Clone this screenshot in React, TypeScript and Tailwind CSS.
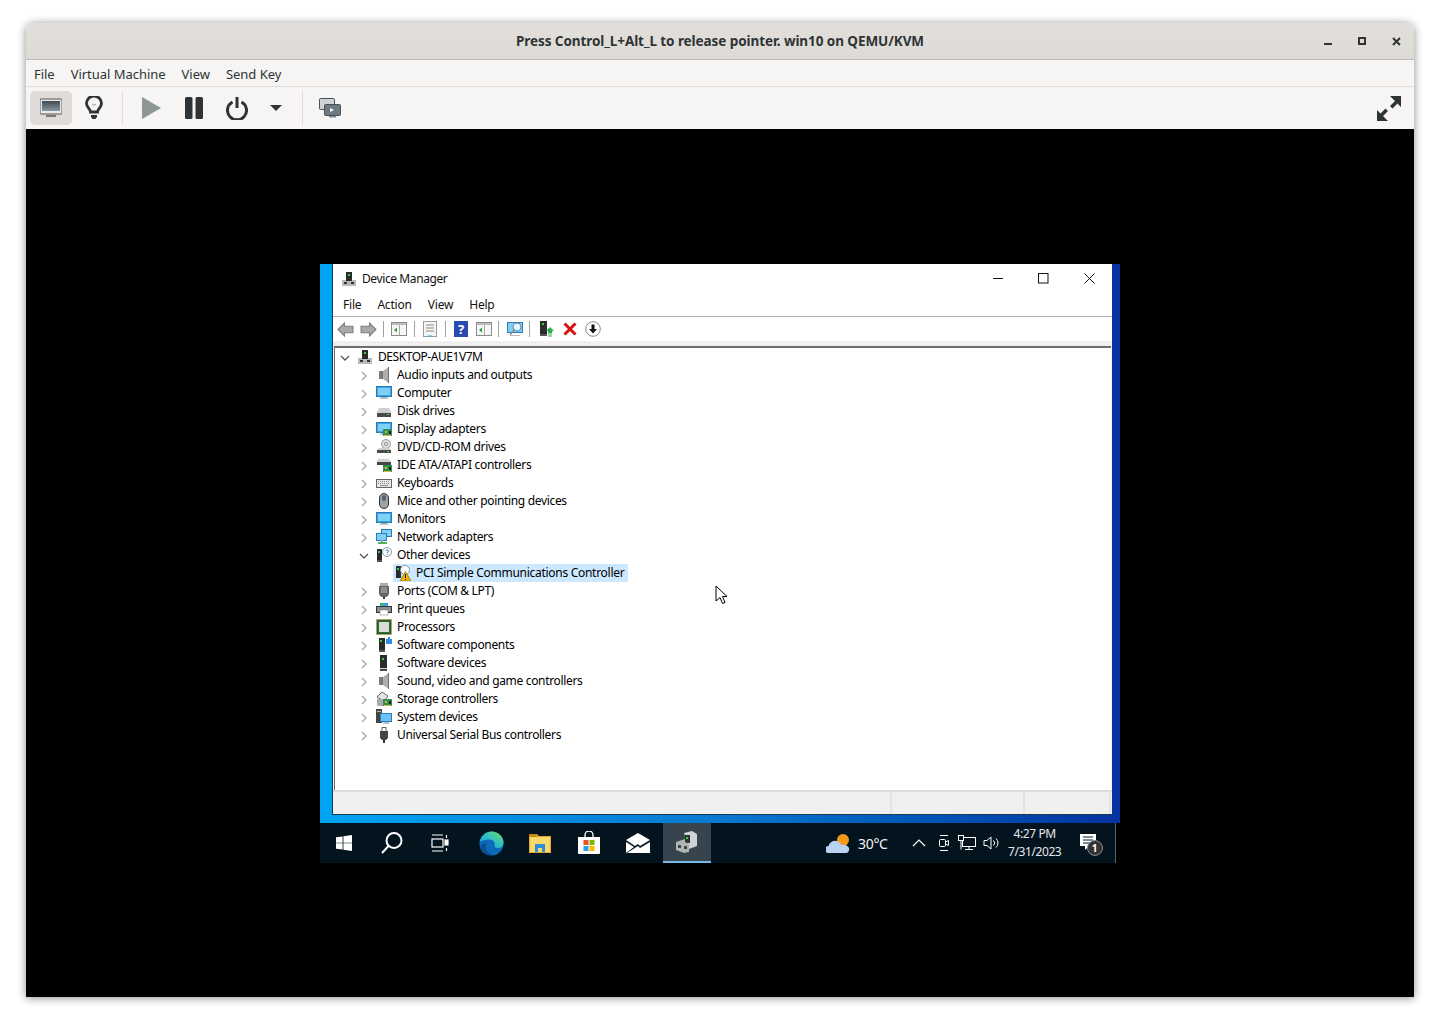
import type { ReactNode } from 'react'

const winFont = 'font-["Noto_Sans",sans-serif]'

type IconName =
  | 'root' | 'audio' | 'computer' | 'disk' | 'display' | 'dvd' | 'ide' | 'keyboard' | 'mouse' | 'monitor'
  | 'network' | 'other' | 'warn' | 'ports' | 'print' | 'cpu' | 'swcomp' | 'swdev' | 'storage' | 'system' | 'usb'

const TREE: { label: string; icon: IconName; open?: boolean }[] = [
  { label: 'Audio inputs and outputs', icon: 'audio' },
  { label: 'Computer', icon: 'computer' },
  { label: 'Disk drives', icon: 'disk' },
  { label: 'Display adapters', icon: 'display' },
  { label: 'DVD/CD-ROM drives', icon: 'dvd' },
  { label: 'IDE ATA/ATAPI controllers', icon: 'ide' },
  { label: 'Keyboards', icon: 'keyboard' },
  { label: 'Mice and other pointing devices', icon: 'mouse' },
  { label: 'Monitors', icon: 'monitor' },
  { label: 'Network adapters', icon: 'network' },
  { label: 'Other devices', icon: 'other', open: true },
]

const TREE_AFTER: { label: string; icon: IconName }[] = [
  { label: 'Ports (COM & LPT)', icon: 'ports' },
  { label: 'Print queues', icon: 'print' },
  { label: 'Processors', icon: 'cpu' },
  { label: 'Software components', icon: 'swcomp' },
  { label: 'Software devices', icon: 'swdev' },
  { label: 'Sound, video and game controllers', icon: 'audio' },
  { label: 'Storage controllers', icon: 'storage' },
  { label: 'System devices', icon: 'system' },
  { label: 'Universal Serial Bus controllers', icon: 'usb' },
]

function Svg({ size = 16, vb = 16, className, children }: { size?: number; vb?: number; className?: string; children: ReactNode }) {
  return (
    <svg width={size} height={size} viewBox={`0 0 ${vb} ${vb}`} className={className} fill="none">
      {children}
    </svg>
  )
}

function Tower() {
  return (
    <>
      <rect x="5" y="1" width="6" height="9" fill="#2b2b2b" />
      <rect x="7" y="3" width="2" height="2" fill="#35d04a" />
      <path d="M1 9h4v1h6V9h4v6H1z" fill="#b9b9b9" />
      <rect x="3" y="11" width="3" height="2" fill="#333" />
      <rect x="10" y="11" width="3" height="2" fill="#333" />
    </>
  )
}

function Screen() {
  return (
    <>
      <rect x="0.5" y="1.5" width="15" height="10" fill="#39a6e8" stroke="#2a7cb8" />
      <rect x="2" y="3" width="12" height="7" fill="#7fd0f7" />
      <rect x="5" y="12" width="6" height="1" fill="#9aa5ad" />
      <rect x="3" y="13" width="10" height="1" fill="#c5ccd2" />
    </>
  )
}

function Chip() {
  return (
    <>
      <rect x="7" y="8" width="9" height="7" fill="#2f8f4f" />
      <rect x="9" y="10" width="2" height="2" fill="#d9b13b" />
      <rect x="13" y="10" width="2" height="3" fill="#123" />
      <rect x="8" y="14" width="7" height="1" fill="#e0b93d" />
    </>
  )
}

function DeviceIcon({ name }: { name: IconName }) {
  switch (name) {
    case 'root':
      return <Svg><Tower /></Svg>
    case 'audio':
      return (
        <Svg>
          <rect x="3" y="4" width="4" height="8" fill="#7b7b7b" />
          <path d="M7 4l6-4v16l-6-4z" fill="#adadad" />
          <path d="M12.500 0v16" stroke="#6f6f6f" />
        </Svg>
      )
    case 'computer':
    case 'monitor':
      return <Svg><Screen /></Svg>
    case 'disk':
      return (
        <Svg>
          <path d="M3 5h10l2 4v5H1V9z" fill="#cfcfcf" />
          <rect x="1" y="10" width="14" height="4" fill="#4a4a4a" />
          <rect x="11" y="11" width="2" height="1" fill="#37d24c" />
        </Svg>
      )
    case 'display':
      return <Svg><Screen /><Chip /></Svg>
    case 'dvd':
      return (
        <Svg>
          <circle cx="10" cy="5" r="4.5" fill="#ddd" stroke="#9a9a9a" />
          <circle cx="10" cy="5" r="1.5" fill="#fff" stroke="#888" />
          <path d="M3 9h10l2 2v3H1v-3z" fill="#cfcfcf" />
          <rect x="1" y="11" width="14" height="3" fill="#4a4a4a" />
          <rect x="11" y="12" width="2" height="1" fill="#37d24c" />
        </Svg>
      )
    case 'ide':
      return (
        <Svg>
          <path d="M2 2h11l2 3v3H1V5z" fill="#d2d2d2" />
          <rect x="1" y="5" width="14" height="3" fill="#444" />
          <Chip />
        </Svg>
      )
    case 'keyboard':
      return (
        <Svg>
          <rect x="0.5" y="4.5" width="15" height="8" fill="#e6e6e6" stroke="#666" />
          <path d="M2 6.500h12M2 8.500h12" stroke="#8e8e8e" strokeDasharray="1 1" />
          <path d="M4 10.500h8" stroke="#8e8e8e" />
        </Svg>
      )
    case 'mouse':
      return (
        <Svg>
          <rect x="3.500" y="0.500" width="9" height="15" rx="4.500" fill="#9aa2aa" stroke="#333" />
          <rect x="6" y="2" width="4" height="6" rx="2" fill="#59626b" />
        </Svg>
      )
    case 'network':
      return (
        <Svg>
          <rect x="5.500" y="0.500" width="10" height="7" fill="#7fd0f7" stroke="#2a7cb8" />
          <rect x="0.500" y="4.500" width="10" height="7" fill="#7fd0f7" stroke="#2a7cb8" />
          <rect x="2" y="13" width="9" height="2" fill="#4cb35f" />
          <rect x="5" y="11" width="2" height="2" fill="#9aa5ad" />
        </Svg>
      )
    case 'other':
      return (
        <Svg>
          <rect x="1" y="2" width="5" height="11" fill="#2b2b2b" />
          <rect x="2" y="4" width="2" height="2" fill="#35d04a" />
          <rect x="1" y="13" width="5" height="2" fill="#555" />
          <circle cx="11" cy="5" r="4.500" fill="#fff" stroke="#8a9aa8" />
          <path d="M9.700 3.800c.3-1.200 2.800-1.200 2.800.3 0 1-1.300 1-1.300 2M11.200 7v.8" stroke="#2b6fb5" />
        </Svg>
      )
    case 'warn':
      return (
        <Svg>
          <rect x="1" y="1" width="5" height="12" fill="#2b2b2b" />
          <rect x="2" y="3" width="2" height="2" fill="#35d04a" />
          <circle cx="10" cy="5" r="4.500" fill="#fff" stroke="#8a9aa8" />
          <path d="M10.500 6.500L16 16H5z" fill="#f2b600" stroke="#7d5b00" strokeWidth="0.6" />
          <path d="M10.500 9v4M10.500 14v1" stroke="#222" />
        </Svg>
      )
    case 'ports':
      return (
        <Svg>
          <path d="M3 3h10v8l-2 3H5l-2-3z" fill="#666" />
          <rect x="4" y="0" width="8" height="3" fill="#aaa" />
          <path d="M5 5h6M5 7h6M5 9h6" stroke="#bbb" />
          <rect x="7" y="14" width="2" height="2" fill="#333" />
        </Svg>
      )
    case 'print':
      return (
        <Svg>
          <rect x="4" y="2" width="8" height="4" fill="#3aa0e0" />
          <rect x="4" y="2" width="3" height="2" fill="#35c24c" />
          <rect x="0.500" y="5.500" width="15" height="6" fill="#8c8c8c" stroke="#333" />
          <rect x="4" y="9" width="8" height="5" fill="#fff" stroke="#777" strokeWidth="0.5" />
        </Svg>
      )
    case 'cpu':
      return (
        <Svg>
          <rect x="0.500" y="0.500" width="15" height="15" fill="#245c2f" stroke="#c4a53a" strokeDasharray="1 1" />
          <rect x="2" y="2" width="12" height="12" fill="#2e6b39" />
          <rect x="3" y="3" width="10" height="10" fill="#d8dcd8" />
        </Svg>
      )
    case 'swcomp':
      return (
        <Svg>
          <rect x="3" y="1" width="6" height="12" fill="#2b2b2b" />
          <rect x="4" y="3" width="2" height="2" fill="#35d04a" />
          <rect x="3" y="13" width="6" height="2" fill="#555" />
          <path d="M10 2h2V0h2v2h2v5h-6z" fill="#2f8fe0" />
        </Svg>
      )
    case 'swdev':
      return (
        <Svg>
          <rect x="4" y="0" width="7" height="13" fill="#2b2b2b" />
          <rect x="6" y="3" width="2" height="2" fill="#35d04a" />
          <rect x="4" y="13" width="7" height="1" fill="#ccc" />
          <rect x="4" y="14" width="7" height="2" fill="#444" />
        </Svg>
      )
    case 'storage':
      return (
        <Svg>
          <path d="M1 6l5-5 6 4-4 5z" fill="#e4e4e4" stroke="#666" />
          <path d="M1 8h7v7H1z" fill="#aaa" />
          <Chip />
        </Svg>
      )
    case 'system':
      return (
        <Svg>
          <rect x="0" y="0" width="6" height="14" fill="#444" />
          <rect x="1" y="2" width="4" height="1" fill="#bbb" />
          <rect x="4.500" y="4.500" width="11" height="8" fill="#6cc3f3" stroke="#2a7cb8" />
          <rect x="7" y="13" width="6" height="2" fill="#b8c2ca" />
        </Svg>
      )
    case 'usb':
      return (
        <Svg>
          <rect x="6" y="0.500" width="4" height="4" fill="#fff" stroke="#666" />
          <path d="M4 4h8v7l-2 2H6l-2-2z" fill="#444" />
          <rect x="7" y="13" width="2" height="3" fill="#333" />
        </Svg>
      )
  }
}

function Chevron({ open }: { open?: boolean }) {
  return (
    <svg width="16" height="16" viewBox="0 0 16 16" fill="none">
      {open ? (
        <path d="M4 6l4 4 4-4" stroke="#555" strokeWidth="1.300" />
      ) : (
        <path d="M6 4l4 4-4 4" stroke="#a6a6a6" strokeWidth="1.300" />
      )}
    </svg>
  )
}

function TreeRow({ label, icon, open }: { label: string; icon: IconName; open?: boolean }) {
  return (
    <div className="flex h-[18px] items-center pl-[21px]">
      <span className="mt-[2px] flex w-[20px]"><Chevron open={open} /></span>
      <DeviceIcon name={icon} />
      <span className="ml-[5px] text-[12px] tracking-[-0.33px] text-black">{label}</span>
    </div>
  )
}

function ArrowBtn({ flip }: { flip?: boolean }) {
  return (
    <Svg size={17} className={flip ? '-scale-x-100' : ''}>
      <path d="M1 8l6-6v3h8v6H7v3z" fill="#a9a9a9" stroke="#7d7d7d" />
    </Svg>
  )
}

function Sheet({ arrow }: { arrow?: string }) {
  return (
    <Svg>
      <rect x="0.500" y="1.500" width="15" height="13" fill="#f7f7f7" stroke="#8a8a8a" />
      <rect x="1" y="2" width="14" height="2" fill="#bcbcbc" />
      <path d="M8.500 4v10" stroke="#aaa" />
      {arrow ? <path d="M3 9l3-2.500v5z" fill={arrow} /> : <path d="M2 7h5M2 9h5M2 11h5" stroke="#999" />}
    </Svg>
  )
}

function Sep() {
  return <span className="mx-[6px] h-[16px] w-px bg-[#a0a0a0]" />
}

function DmToolbar() {
  return (
    <div className="flex h-[24px] items-center pl-[4px]">
      <ArrowBtn />
      <span className="w-[6px]" />
      <ArrowBtn flip />
      <Sep />
      <span className="ml-[1px] mr-[1px]"><Sheet arrow="#2e9e4b" /></span>
      <Sep />
      <span className="ml-[1px] mr-[1px]">
        <Svg>
          <rect x="1.500" y="0.500" width="13" height="15" fill="#f4f4f4" stroke="#9a9a9a" />
          <path d="M4 4h8M4 7h8M4 10h8" stroke="#8a8a8a" />
          <path d="M6 15h4" stroke="#39a6e8" />
        </Svg>
      </span>
      <Sep />
      <span className="ml-[2px] mr-[8px] flex h-[16px] w-[14px] items-center justify-center bg-[#2a4bb0] text-[13px] font-bold leading-none text-white">?</span>
      <Sheet arrow="#2e9e4b" />
      <Sep />
      <span className="ml-[2px]">
        <Svg>
          <rect x="0.500" y="1.500" width="15" height="10" fill="#7fd0f7" stroke="#2a7cb8" />
          <circle cx="10" cy="6" r="4" fill="#e8f6fd" stroke="#6a8aa0" />
          <path d="M7 9l-4 5" stroke="#8a8a8a" strokeWidth="1.500" />
          <path d="M3 14.500h10" stroke="#bbb" />
        </Svg>
      </span>
      <Sep />
      <span className="ml-[3px]">
        <Svg>
          <rect x="1" y="0" width="7" height="13" fill="#2b2b2b" />
          <rect x="3" y="2" width="2" height="2" fill="#35d04a" />
          <rect x="1" y="13" width="7" height="2" fill="#555" />
          <path d="M11 6l4 4h-2v2H9v-2H7z" fill="#2fae4a" />
          <path d="M9 13h4M9 15h4" stroke="#2fae4a" />
        </Svg>
      </span>
      <span className="ml-[7px]">
        <Svg>
          <path d="M2.500 2.500l11 11M13.500 2.500l-11 11" stroke="#d90f0f" strokeWidth="3" />
        </Svg>
      </span>
      <span className="ml-[7px]">
        <Svg>
          <circle cx="8" cy="8" r="7.300" fill="#fff" stroke="#8a8a8a" />
          <path d="M6.500 3.500h3V8H12l-4 4.500L4 8h2.500z" fill="#111" />
        </Svg>
      </span>
    </div>
  )
}

function DeviceManager() {
  return (
    <div className={`flex h-[550px] flex-col bg-white ${winFont}`}>
      <div className="flex h-[29px] shrink-0 items-center pl-[8px]">
        <Svg><Tower /></Svg>
        <span className="ml-[5px] text-[12px] tracking-[-0.4px] text-[#111]">Device Manager</span>
        <div className="ml-auto flex items-center pr-[17px]">
          <Svg size={11} vb={11}><path d="M0 5.500h10" stroke="#111" /></Svg>
          <span className="w-[34px]" />
          <Svg size={11} vb={11}><rect x="0.500" y="0.500" width="9.500" height="9.500" stroke="#111" /></Svg>
          <span className="w-[35px]" />
          <Svg size={11} vb={11}><path d="M0.500 0.500l10 10M10.500 0.500l-10 10" stroke="#111" /></Svg>
        </div>
      </div>
      <div className="flex h-[24px] shrink-0 items-center gap-[16px] border-b border-[#b0b0b8] pl-[10px] text-[12px] tracking-[-0.2px] text-[#111]">
        <span>File</span>
        <span>Action</span>
        <span>View</span>
        <span>Help</span>
      </div>
      <DmToolbar />
      <div className="flex min-h-0 flex-1 flex-col bg-[#f0f0f0] pt-[5px]">
        <div className="ml-px mr-px flex-1 border-t-2 border-l border-[#6d6d6d] bg-white">
          <div className="flex h-[18px] items-center pl-[2px]">
            <span className="mt-[1px] flex w-[20px]"><Chevron open /></span>
            <DeviceIcon name="root" />
            <span className="ml-[5px] text-[12px] tracking-[-0.45px] text-black">DESKTOP-AUE1V7M</span>
          </div>
          {TREE.map((row) => <TreeRow key={row.label} {...row} />)}
          <div className="flex h-[18px] items-center pl-[58px]">
            <span className="flex h-[18px] items-center bg-[#cce8ff] pl-[2px] pr-[4px] text-[12px] tracking-[-0.28px] text-black">
              <DeviceIcon name="warn" />
              <span className="ml-[5px]">PCI Simple Communications Controller</span>
            </span>
          </div>
          {TREE_AFTER.map((row) => <TreeRow key={row.label} {...row} />)}
        </div>
        <div className="flex h-[24px] shrink-0 border-t-2 border-[#dcdcdc]">
          <span className="w-[559px] border-r-2 border-[#e3e3e3]" />
          <span className="w-[133px] border-r-2 border-[#e3e3e3]" />
          <span className="w-[86px] border-r-2 border-[#e3e3e3]" />
        </div>
      </div>
    </div>
  )
}

function TaskSlot({ width = 'w-[48px]', active, children }: { width?: string; active?: boolean; children: ReactNode }) {
  return (
    <div className={`flex h-full ${width} items-center justify-center ${active ? 'border-b-2 border-[#76b9ed] bg-[#37444d]' : ''}`}>
      {children}
    </div>
  )
}

function Taskbar() {
  return (
    <div className="flex h-[40px] w-[796px] items-center border-r border-[#5a646b] bg-[#03141f] font-['Noto_Sans',sans-serif] text-white">
      <TaskSlot>
        <svg width="16" height="16" viewBox="0 0 16 16"><path d="M0 2.300l6.600-.9v6.300H0zM7.400 1.300L16 0v7.700H7.400zM0 8.300h6.600v6.300L0 13.700zM7.400 8.300H16V16l-8.600-1.300z" fill="#fff" /></svg>
      </TaskSlot>
      <TaskSlot>
        <svg width="24" height="24" viewBox="0 0 24 24" fill="none"><circle cx="14" cy="9.500" r="7.500" stroke="#fff" strokeWidth="2" /><path d="M8.500 15L2 22" stroke="#fff" strokeWidth="2" /></svg>
      </TaskSlot>
      <TaskSlot>
        <svg width="18" height="18" viewBox="0 0 18 18" fill="none" stroke="#fff" strokeWidth="1.200"><path d="M1 1h11M1 17h11" /><rect x="1" y="5" width="11" height="8" /><path d="M15.500 1v3M15.500 14v3" /><rect x="14" y="6" width="3" height="5" fill="#fff" /></svg>
      </TaskSlot>
      <span className="w-[3px]" />
      <TaskSlot width="w-[49px]">
        <svg width="25" height="25" viewBox="0 0 25 25">
          <defs>
            <linearGradient id="edgeTop" x1="0" y1="1" x2="1" y2="0">
              <stop offset="0" stopColor="#1b9de2" />
              <stop offset="0.55" stopColor="#35c1c0" />
              <stop offset="1" stopColor="#72e05a" />
            </linearGradient>
          </defs>
          <circle cx="12.500" cy="12.500" r="12" fill="#0d6ab8" />
          <path d="M.7 11C2 4.500 7.500.5 12.500.5c7 0 12 5.500 12 11 0 3.500-2.500 5.500-5.500 5.500-2.500 0-4-1-3.500-2.500 1-3-1.500-6-5-6-4 0-8 1-10.300 2.500z" fill="url(#edgeTop)" />
          <path d="M7.500 12c-2.500 4 0 10 6 11.500-5.500 1.500-11-1.500-12.500-7C3 13 5.500 12 7.500 12z" fill="#0a4f94" />
        </svg>
      </TaskSlot>
      <TaskSlot width="w-[48px]">
        <svg width="22" height="20" viewBox="0 0 22 20">
          <path d="M0 1h8l2 2h12v17H0z" fill="#e0a92e" />
          <rect x="0" y="1" width="8" height="3" fill="#c98a12" />
          <rect x="1" y="4" width="20" height="15" fill="#fbd96b" />
          <path d="M6 19v-8h10v8h-3v-4H9v4z" fill="#2d8fdc" />
        </svg>
      </TaskSlot>
      <TaskSlot width="w-[49px]">
        <svg width="24" height="24" viewBox="0 0 24 24" fill="none">
          <path d="M8 7V4a4 4 0 0 1 8 0v3" stroke="#fff" strokeWidth="1.300" />
          <path d="M1 6h22v16a1 1 0 0 1-1 1H2a1 1 0 0 1-1-1z" fill="#fff" />
          <rect x="6.500" y="9" width="5" height="5" fill="#e8532b" />
          <rect x="12.500" y="9" width="5" height="5" fill="#7fba00" />
          <rect x="6.500" y="15" width="5" height="5" fill="#2b9fe8" />
          <rect x="12.500" y="15" width="5" height="5" fill="#fdb900" />
        </svg>
      </TaskSlot>
      <TaskSlot width="w-[49px]">
        <svg width="24" height="20" viewBox="0 0 24 20">
          <path d="M0 7L12 0l12 7-10 6-2-2-3 2z" fill="#fff" />
          <path d="M0 9l8 5-8 6zM24 9v11H1l11-7 2 2z" fill="#fff" />
        </svg>
      </TaskSlot>
      <span className="w-px" />
      <TaskSlot active>
        <svg width="24" height="22" viewBox="0 0 24 22">
          <path d="M9 2l8-2 5 3v12l-8 3z" fill="#cfd3d6" />
          <rect x="10" y="4" width="5" height="8" fill="#333" />
          <rect x="11" y="6" width="2" height="2" fill="#35d04a" />
          <path d="M1 11l9-3v3l4 2v8l-5 1-8-3z" fill="#aeb3b6" />
          <rect x="3" y="14" width="3" height="3" fill="#444" />
          <rect x="9" y="15" width="3" height="3" fill="#444" />
        </svg>
      </TaskSlot>
      <span className="w-[115px]" />
      <svg width="24" height="20" viewBox="0 0 24 20">
        <circle cx="17" cy="7" r="6" fill="#f39a1e" />
        <path d="M3 20a3.500 3.500 0 0 1-.5-7C4 8 10 6 14 10c1 1 1 2 1 2 4-1 7 .5 8 3 .7 3-1 5-3 5z" fill="#b9d3f2" />
      </svg>
      <span className="ml-[8px] text-[14px] tracking-[-0.3px] text-[#f2f2f2]">30°C</span>
      <span className="ml-[24px]">
        <svg width="14" height="14" viewBox="0 0 14 14" fill="none"><path d="M1 10l6-6 6 6" stroke="#fff" strokeWidth="1.200" /></svg>
      </span>
      <span className="ml-[11px]">
        <svg width="14" height="18" viewBox="0 0 14 18" fill="none" stroke="#fff"><path d="M3 1.500h8M3 16.500h8" /><rect x="2.500" y="5.500" width="6" height="7" rx="1" /><path d="M8.500 8l3-1.500v5l-3-1.500" /></svg>
      </span>
      <span className="ml-[7px]">
        <svg width="18" height="16" viewBox="0 0 18 16" fill="none" stroke="#fff"><rect x="4.500" y="2.500" width="13" height="9" /><rect x="0.500" y="0.500" width="5" height="5" fill="#03141f" /><path d="M11 11.500v3M7 14.500h8M3 5.500v9" /></svg>
      </span>
      <span className="ml-[7px]">
        <svg width="17" height="16" viewBox="0 0 17 16" fill="none" stroke="#fff"><path d="M1 5.500h3L8 2v12l-4-3.500H1z" /><path d="M10.500 5.500a3.500 3.500 0 0 1 0 5M13 3.500a6 6 0 0 1 0 9" /></svg>
      </span>
      <div className="ml-[4px] flex w-[62px] flex-col items-center text-[12px] leading-[18px] tracking-[-0.4px] text-[#e8e8e8]">
        <span>4:27 PM</span>
        <span>7/31/2023</span>
      </div>
      <span className="relative ml-[14px] h-[24px] w-[24px]">
        <svg width="16" height="16" viewBox="0 0 16 16" className="absolute left-0 top-[3px]"><path d="M0 0h16v12H9l-4 4v-4H0z" fill="#fff" /><path d="M3 3h10M3 6h10M3 9h7" stroke="#03141f" /></svg>
        <span className="absolute left-[7px] top-[9px] flex h-[16px] w-[16px] items-center justify-center rounded-full border border-[#888] bg-[#333] text-[10px] font-bold leading-none text-white">1</span>
      </span>
    </div>
  )
}

function VmScreen() {
  return (
    <div className="relative w-[800px]">
      <div className="bg-gradient-to-r from-[#00a4f2] via-[#0a78d0] to-[#0733a0] px-[8px] pb-[8px] pl-[12px]">
        <div className="border-b border-l border-[#1d3a4d]">
          <DeviceManager />
        </div>
      </div>
      <Taskbar />
      {/* guest pointer */}
      <svg width="13" height="21" viewBox="0 0 13 21" className="absolute left-[395px] top-[321px]">
        <path d="M1 1v15l4-3.500 2.500 6 2.500-1-2.500-6H12z" fill="#fff" stroke="#000" />
      </svg>
    </div>
  )
}

function ToolButton({ width = 'w-[42px]', active, children }: { width?: string; active?: boolean; children: ReactNode }) {
  return (
    <div className={`flex h-[34px] ${width} items-center justify-center rounded-[5px] ${active ? 'bg-[#dedbd8]' : ''}`}>
      {children}
    </div>
  )
}

export default function App() {
  return (
    <div className="h-[1026px] w-[1440px] overflow-hidden bg-white pl-[26px] pt-[23px]">
      <div className="flex h-[974px] w-[1388px] flex-col overflow-hidden rounded-t-[8px] font-['Noto_Sans',sans-serif] shadow-[0_1px_10px_rgba(0,0,0,0.45)]">
        <div className="flex h-[37px] shrink-0 items-center border-b border-[#bdb8b3] bg-gradient-to-b from-[#e2dfdb] to-[#dedbd7] pr-[13px]">
          <span className="flex-1 pl-[90px] text-center text-[13.5px] font-bold tracking-[-0.07px] text-[#2e3436]">
            Press Control_L+Alt_L to release pointer. win10 on QEMU/KVM
          </span>
          <svg width="8" height="8" viewBox="0 0 8 8" className="mr-[26px]"><rect x="0" y="6" width="8" height="2" fill="#2e3436" /></svg>
          <svg width="8" height="8" viewBox="0 0 8 8" fill="none" className="mr-[26px]"><rect x="1" y="1" width="6" height="6" stroke="#2e3436" strokeWidth="2" /></svg>
          <svg width="9" height="9" viewBox="0 0 9 9" fill="none"><path d="M1 1l7 7M8 1l-7 7" stroke="#2e3436" strokeWidth="2" /></svg>
        </div>
        <div className="flex h-[27px] shrink-0 items-center gap-[16px] border-b border-[#dfdcd9] bg-[#f6f5f4] pl-[8px] pt-[3px] text-[13px] tracking-[-0.03px] text-[#2e3436]">
          <span>File</span>
          <span>Virtual Machine</span>
          <span>View</span>
          <span>Send Key</span>
        </div>
        <div className="flex h-[42px] shrink-0 items-center bg-[#f6f5f4] pl-[4px] pr-[13px]">
          <ToolButton active>
            <svg width="22" height="20" viewBox="0 0 22 20">
              <defs>
                <linearGradient id="guestScreen" x1="0" y1="0" x2="0" y2="1">
                  <stop offset="0" stopColor="#3f4a52" />
                  <stop offset="1" stopColor="#8a97a0" />
                </linearGradient>
              </defs>
              <rect x="0" y="1" width="22" height="15" rx="1" fill="#e9e9e9" stroke="#555" />
              <rect x="2" y="3" width="18" height="10" fill="url(#guestScreen)" />
              <rect x="6" y="17" width="10" height="2" fill="#777" />
            </svg>
          </ToolButton>
          <span className="w-px" />
          <ToolButton>
            <svg width="18" height="24" viewBox="0 0 18 24" fill="none">
              <path d="M5.500 16c0-3-4-4.500-4-8.500a7.500 7.500 0 0 1 15 0c0 4-4 5.500-4 8.500z" stroke="#2e3436" strokeWidth="2.800" />
              <path d="M7 8l2 1.500L11 8" stroke="#999" />
              <path d="M6 19h6v2l-1.500 2h-3L6 21z" fill="#2e3436" />
            </svg>
          </ToolButton>
          <span className="mx-[7px] h-[34px] w-px bg-[#dfdcd9]" />
          <ToolButton>
            <svg width="20" height="22" viewBox="0 0 20 22"><path d="M1 0l19 11L1 22z" fill="#8f9696" /></svg>
          </ToolButton>
          <span className="w-px" />
          <ToolButton>
            <svg width="18" height="22" viewBox="0 0 18 22"><rect x="0" y="0" width="7.500" height="22" rx="1.500" fill="#2e3436" /><rect x="10.500" y="0" width="7.500" height="22" rx="1.500" fill="#2e3436" /></svg>
          </ToolButton>
          <span className="w-px" />
          <ToolButton>
            <svg width="22" height="24" viewBox="0 0 22 24" fill="none">
              <path d="M6.500 6a9.500 9.500 0 1 0 9 0" stroke="#2e3436" strokeWidth="3" />
              <path d="M11 1v11" stroke="#2e3436" strokeWidth="3" />
            </svg>
          </ToolButton>
          <ToolButton width="w-[36px]">
            <svg width="12" height="6" viewBox="0 0 12 6"><path d="M0 0h12L6 6z" fill="#2e3436" /></svg>
          </ToolButton>
          <span className="ml-[8px] mr-[6px] h-[34px] w-px bg-[#dfdcd9]" />
          <ToolButton>
            <svg width="22" height="20" viewBox="0 0 22 20" fill="none">
              <rect x="0.500" y="0.500" width="15" height="11" rx="1" fill="#cfd3d6" stroke="#4a5055" />
              <rect x="5.500" y="6.500" width="16" height="11" rx="1" fill="#6e7a82" stroke="#4a5055" />
              <path d="M11 10l4 2-4 2z" fill="#fff" />
              <rect x="10" y="18" width="7" height="1.500" fill="#888" />
            </svg>
          </ToolButton>
          <svg width="24" height="25" viewBox="0 0 24 25" className="ml-auto" fill="#2e3436">
            <path d="M13 0h11v11l-3.500-3.500L15.500 12.500l-2.500-2.500L18 5zM11 25H0V14l3.500 3.500L8.500 12.500l2.500 2.500L6 20z" />
          </svg>
        </div>
        <div className="flex flex-1 justify-center bg-black pt-[135px]">
          <VmScreen />
        </div>
      </div>
    </div>
  )
}
